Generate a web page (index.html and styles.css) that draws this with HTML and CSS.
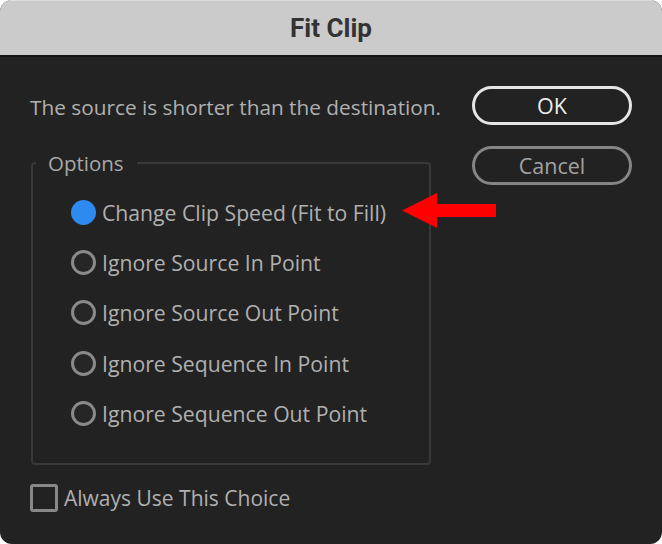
FILE: index.html
```html
<!DOCTYPE html>
<html>
<head>
<meta charset="utf-8">
<link rel="stylesheet" href="styles.css">
</head>
<body>
<div class="window">
  <div class="titlebar">Fit Clip</div>
  <div class="content">
    <div class="left">
      <div class="message">The source is shorter than the destination.</div>
      <fieldset class="options">
        <legend>Options</legend>
        <div class="row"><span class="radio checked"></span><span class="label">Change Clip Speed (Fit to Fill)</span></div>
        <div class="row"><span class="radio"></span><span class="label">Ignore Source In Point</span></div>
        <div class="row"><span class="radio"></span><span class="label">Ignore Source Out Point</span></div>
        <div class="row"><span class="radio"></span><span class="label">Ignore Sequence In Point</span></div>
        <div class="row"><span class="radio"></span><span class="label">Ignore Sequence Out Point</span></div>
      </fieldset>
      <div class="check-row"><span class="checkbox"></span><span class="label">Always Use This Choice</span></div>
    </div>
    <div class="right">
      <div class="btn primary">OK</div>
      <div class="btn secondary">Cancel</div>
    </div>
  </div>
  <svg class="arrow" width="95" height="36" viewBox="0 0 95 36"><polygon points="0,17.5 35,0 35,11 94,11 94,24 35,24 35,35" fill="#ff0000"/></svg>
</div>
</body>
</html>
```
FILE: styles.css
```css
html, body {
  margin: 0;
  padding: 0;
  background: #ffffff;
}
.window {
  position: relative;
  width: 662px;
  height: 544px;
  background: #222222;
  border-radius: 12px;
  overflow: hidden;
  font-family: "Open Sans", "Noto Sans", sans-serif;
  color: #adadad;
}
.titlebar {
  height: 54px;
  border-top: 1px solid #dedede;
  background: #cbcbcb;
  border-bottom: 2px solid #121212;
  box-sizing: content-box;
  display: flex;
  align-items: center;
  justify-content: center;
  font-family: Roboto, "Liberation Sans", sans-serif;
  font-weight: 700;
  font-size: 26px;
  color: #333333;
}
.content {
  display: flex;
  justify-content: space-between;
  padding: 29px 30px 0 30px;
}
.left {
  width: 402px;
  display: flex;
  flex-direction: column;
}
.message {
  height: 39px;
  display: flex;
  align-items: center;
  padding-top: 3px;
  box-sizing: border-box;
  font-size: 20.8px;
  white-space: nowrap;
  color: #b0b0b0;
}
.options {
  margin: 24px 0 0 1px;
  padding: 10px 0 25px 38px;
  border: 2px solid #393939;
  border-radius: 4px;
  width: 400px;
  box-sizing: border-box;
}
.options legend {
  margin-left: -35px;
  padding: 0 13px 0 12px;
  font-size: 20.5px;
  color: #a8a8a8;
}
.row {
  height: 50.3px;
  display: flex;
  align-items: center;
  gap: 6px;
  font-size: 21.2px;
}
.row:first-of-type {
  margin-top: 0;
}
.radio {
  width: 25px;
  height: 25px;
  box-sizing: border-box;
  border-radius: 50%;
  border: 3px solid #8a8a8a;
  background: #262626;
  flex: none;
}
.radio.checked {
  border: none;
  background: #2d8bef;
}
.label {
  color: #b0b0b0;
  white-space: nowrap;
}
.check-row {
  margin-top: 19px;
  display: flex;
  align-items: center;
  gap: 6px;
  font-size: 21px;
}
.checkbox {
  width: 28px;
  height: 28px;
  box-sizing: border-box;
  border: 3px solid #888888;
  border-radius: 3px;
  flex: none;
}
.right {
  width: 160px;
  display: flex;
  flex-direction: column;
  gap: 21px;
}
.btn {
  height: 39px;
  box-sizing: border-box;
  border-radius: 20px;
  display: flex;
  align-items: center;
  justify-content: center;
  font-size: 21.5px;
}
.btn.primary {
  border: 3px solid #e6e6e6;
  color: #ececec;
}
.btn.secondary {
  border: 3px solid #858585;
  color: #a2a2a2;
}
.arrow {
  position: absolute;
  left: 402px;
  top: 193px;
}
```
